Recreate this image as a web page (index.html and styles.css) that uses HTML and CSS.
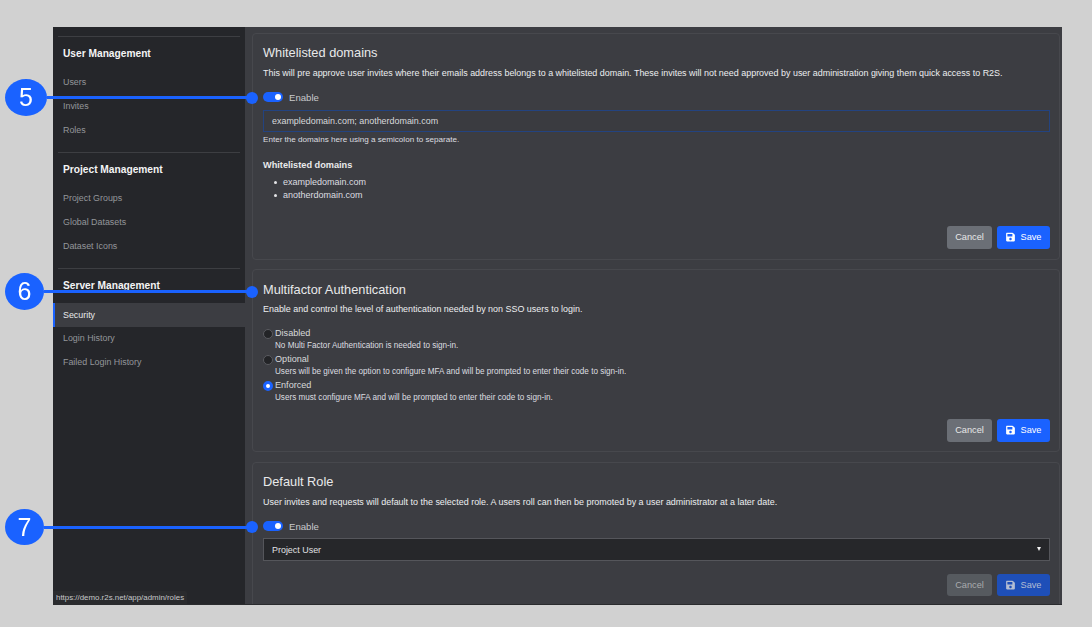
FILE: index.html
```html
<!DOCTYPE html>
<html lang="en">
<head>
<meta charset="utf-8">
<title>Security</title>
<link rel="stylesheet" href="styles.css">
</head>
<body>
<div class="app">
  <aside class="sidebar">
    <section class="nav-group">
      <h3>User Management</h3>
      <a>Users</a><a>Invites</a><a>Roles</a>
    </section>
    <section class="nav-group">
      <h3>Project Management</h3>
      <a>Project Groups</a><a>Global Datasets</a><a>Dataset Icons</a>
    </section>
    <section class="nav-group server">
      <h3>Server Management</h3>
      <a class="active">Security</a><a>Login History</a><a>Failed Login History</a>
    </section>
    <div class="status">https://demo.r2s.net/app/admin/roles</div>
  </aside>
  <main class="main">
    <section class="card card-domains">
      <h2>Whitelisted domains</h2>
      <p class="desc">This will pre approve user invites where their emails address belongs to a whitelisted domain. These invites will not need approved by user administration giving them quick access to R2S.</p>
      <div class="toggle-row"><span class="toggle"></span><span>Enable</span></div>
      <div class="input focus">exampledomain.com; anotherdomain.com</div>
      <p class="hint">Enter the domains here using a semicolon to separate.</p>
      <h4>Whitelisted domains</h4>
      <ul><li>exampledomain.com</li><li>anotherdomain.com</li></ul>
      <div class="actions">
        <button class="btn cancel">Cancel</button>
        <button class="btn save"><svg viewBox="0 0 448 512" class="ico"><path fill="currentColor" d="M433.9 129.9l-83.9-83.9A48 48 0 0 0 316.1 32H48C21.5 32 0 53.5 0 80v352c0 26.5 21.5 48 48 48h352c26.5 0 48-21.5 48-48V163.9a48 48 0 0 0-14.1-34zM224 416c-35.3 0-64-28.7-64-64s28.7-64 64-64 64 28.7 64 64-28.7 64-64 64zm96-304.5V212c0 6.600-5.400 12-12 12H76c-6.600 0-12-5.400-12-12V108c0-6.600 5.400-12 12-12h228.500c3.200 0 6.200 1.300 8.500 3.500l3.500 3.500c2.300 2.300 3.500 5.300 3.500 8.500z"/></svg>Save</button>
      </div>
    </section>
    <section class="card card-mfa">
      <h2>Multifactor Authentication</h2>
      <p class="desc">Enable and control the level of authentication needed by non SSO users to login.</p>
      <div class="radios">
        <div class="radio"><span class="dot"></span><div><div class="label">Disabled</div><div class="sub">No Multi Factor Authentication is needed to sign-in.</div></div></div>
        <div class="radio"><span class="dot"></span><div><div class="label">Optional</div><div class="sub">Users will be given the option to configure MFA and will be prompted to enter their code to sign-in.</div></div></div>
        <div class="radio"><span class="dot on"></span><div><div class="label">Enforced</div><div class="sub">Users must configure MFA and will be prompted to enter their code to sign-in.</div></div></div>
      </div>
      <div class="actions">
        <button class="btn cancel">Cancel</button>
        <button class="btn save"><svg viewBox="0 0 448 512" class="ico"><path fill="currentColor" d="M433.9 129.9l-83.9-83.9A48 48 0 0 0 316.1 32H48C21.5 32 0 53.5 0 80v352c0 26.5 21.5 48 48 48h352c26.5 0 48-21.5 48-48V163.9a48 48 0 0 0-14.1-34zM224 416c-35.3 0-64-28.7-64-64s28.7-64 64-64 64 28.7 64 64-28.7 64-64 64zm96-304.5V212c0 6.600-5.400 12-12 12H76c-6.600 0-12-5.400-12-12V108c0-6.600 5.400-12 12-12h228.500c3.200 0 6.200 1.300 8.500 3.500l3.500 3.500c2.300 2.300 3.500 5.300 3.500 8.500z"/></svg>Save</button>
      </div>
    </section>
    <section class="card card-role">
      <h2>Default Role</h2>
      <p class="desc">User invites and requests will default to the selected role. A users roll can then be promoted by a user administrator at a later date.</p>
      <div class="toggle-row"><span class="toggle"></span><span>Enable</span></div>
      <div class="input select">Project User<span class="caret"></span></div>
      <div class="actions">
        <button class="btn cancel off">Cancel</button>
        <button class="btn save off"><svg viewBox="0 0 448 512" class="ico"><path fill="currentColor" d="M433.9 129.9l-83.9-83.9A48 48 0 0 0 316.1 32H48C21.5 32 0 53.5 0 80v352c0 26.5 21.5 48 48 48h352c26.5 0 48-21.5 48-48V163.9a48 48 0 0 0-14.1-34zM224 416c-35.3 0-64-28.7-64-64s28.7-64 64-64 64 28.700 64 64-28.7 64-64 64zm96-304.5V212c0 6.600-5.400 12-12 12H76c-6.600 0-12-5.400-12-12V108c0-6.600 5.400-12 12-12h228.500c3.200 0 6.200 1.300 8.500 3.500l3.500 3.500c2.300 2.300 3.500 5.300 3.500 8.500z"/></svg>Save</button>
      </div>
    </section>
  </main>
</div>
<div class="callout c5"><span class="num">5</span><span class="line"></span><span class="end"></span></div>
<div class="callout c6"><span class="num">6</span><span class="line"></span><span class="end"></span></div>
<div class="callout c7"><span class="num">7</span><span class="line"></span><span class="end"></span></div>
</body>
</html>
```
FILE: styles.css
```css
* { box-sizing: border-box; }
html, body { height: 100%; }
body {
  margin: 0;
  padding: 27px 30px 22px 53px;
  background: #d1d1d1;
  font-family: "Liberation Sans", Arial, sans-serif;
  color: #eceef0;
  overflow: hidden;
  position: relative;
}
.app { display: flex; height: 578px; overflow: hidden; background: #3c3d42; border-bottom: 1px solid #2a2b2e; }
.sidebar { position: relative; width: 192px; flex: none; background: #25262a; padding-top: 9px; }
.nav-group { padding-bottom: 10px; }
.nav-group h3 {
  margin: 0 5px;
  padding: 10px 5px 0;
  height: 34px;
  border-top: 1px solid #3d3e42;
  font-size: 10.2px;
  line-height: 13px;
  font-weight: 700;
  color: #f4f4f5;
}
.server.nav-group h3 { height: 35px; }
.nav-group a {
  display: block;
  height: 24px;
  line-height: 24px;
  padding-left: 10px;
  font-size: 8.9px;
  color: #94969a;
}
.nav-group a.active { background: #3c3d42; color: #e8e9eb; border-left: 2px solid #1a62ff; padding-left: 8px; }
.nav-group .active + a { margin-top: -1px; }
.status {
  position: absolute; left: 0; bottom: 0;
  height: 13px; padding: 0 3px; line-height: 14px;
  font-size: 7.9px; color: #c5c6c8; background: #2a2b2e; border-top-right-radius: 2px;
}
.main { flex: 1; padding: 6px 2px 0 7px; display: flex; flex-direction: column; min-width: 0; }
.card { border: 1px solid #47484d; border-radius: 4px; padding: 0 9px 0 10px; position: relative; flex: none; }
.card-domains { height: 227px; padding-top: 10px; }
.card-mfa { height: 183px; padding-top: 11px; margin-top: 9px; }
.card-role { height: 160px; padding-top: 10px; margin-top: 10px; }
h2 { margin: 0; font-size: 12.8px; line-height: 17px; font-weight: 400; color: #e8e9ea; }
.desc { margin: 6px 0 0; font-size: 8.95px; line-height: 12px; color: #eceef0; }
.card-mfa .desc { margin-top: 5px; }
.toggle-row { display: flex; align-items: center; gap: 6px; margin-top: 11px; height: 14px; font-size: 9.6px; color: #c9cacc; }
.toggle { width: 20px; height: 10px; border-radius: 5px; background: #1a62ff; position: relative; }
.toggle::after { content: ""; position: absolute; right: 2px; top: 2px; width: 6px; height: 6px; border-radius: 50%; background: #fff; }
.input { margin-top: 6px; height: 22px; border: 1px solid #234380; background: #3a3b40; padding: 0 8px; line-height: 21px; font-size: 8.93px; color: #d8d9db; }
.select { position: relative; height: 23px; line-height: 22px; border: 1px solid #55565b; background: #26272a; color: #e0e1e3; margin-top: 5px; }
.caret { position: absolute; right: 8px; top: 8px; border: 2.800px solid transparent; border-top: 4px solid #f2f2f2; border-bottom: 0; }
.hint { margin: 2px 0 0; font-size: 8.1px; line-height: 11px; color: #dcdde0; }
h4 { margin: 14px 0 0; font-size: 9.2px; line-height: 12px; font-weight: 700; color: #e9eaeb; }
ul { margin: 5px 0 0; padding: 0 0 0 20px; list-style: none; font-size: 9px; line-height: 13.4px; color: #dcdde0; }
li { position: relative; }
li::before { content: ""; position: absolute; left: -9px; top: 5px; width: 3px; height: 3px; border-radius: 50%; background: #e4e5e7; }
.radios { margin-top: 12px; }
.radio { display: flex; gap: 2px; height: 26px; }
.dot { width: 10px; height: 10px; margin-top: 1.500px; border-radius: 50%; background: #232427; border: 1px solid #5a5b60; flex: none; }
.dot.on { background: #fff; border: 3px solid #1a62ff; }
.label { font-size: 9.1px; line-height: 13px; color: #d8d9db; }
.sub { font-size: 8.13px; line-height: 11px; color: #dcdde0; }
.actions { position: absolute; right: 9px; display: flex; gap: 5px; }
.card-domains .actions { top: 192px; }
.card-mfa .actions { top: 149px; }
.card-role .actions { top: 110.500px; }
.btn { height: 22.500px; border: 0; border-radius: 3px; font: 9.2px "Liberation Sans", Arial, sans-serif; display: flex; align-items: center; justify-content: center; color: #fff; padding: 0; }
.cancel { width: 45px; background: #6b6f76; color: #e8e8e8; }
.save { width: 53px; background: #1a62ff; gap: 6px; }
.cancel.off { background: #565a5f; color: #a9abae; }
.save.off { background: #1e4fb8; color: #b4bed3; }
.ico { width: 9px; height: 10px; }
.num { position: fixed; left: 5px; border-radius: 50%; background: #1a62ff; color: #fff; text-align: center; font-size: 25px; }
.line { position: fixed; height: 3px; background: #1a62ff; }
.end { position: fixed; left: 246px; width: 12px; height: 12px; border-radius: 50%; background: #1a62ff; }
.c5 .num { top: 79px; width: 42px; height: 37px; line-height: 37px; }
.c5 .line { left: 47px; top: 96px; width: 200px; }
.c5 .end { top: 92px; }
.c6 .num { top: 273px; width: 39px; height: 37px; line-height: 37px; }
.c6 .line { left: 44px; top: 290px; width: 203px; }
.c6 .end { top: 286px; }
.c7 .num { top: 509px; width: 39px; height: 36px; line-height: 36px; }
.c7 .line { left: 44px; top: 526px; width: 203px; }
.c7 .end { top: 521px; }
```
